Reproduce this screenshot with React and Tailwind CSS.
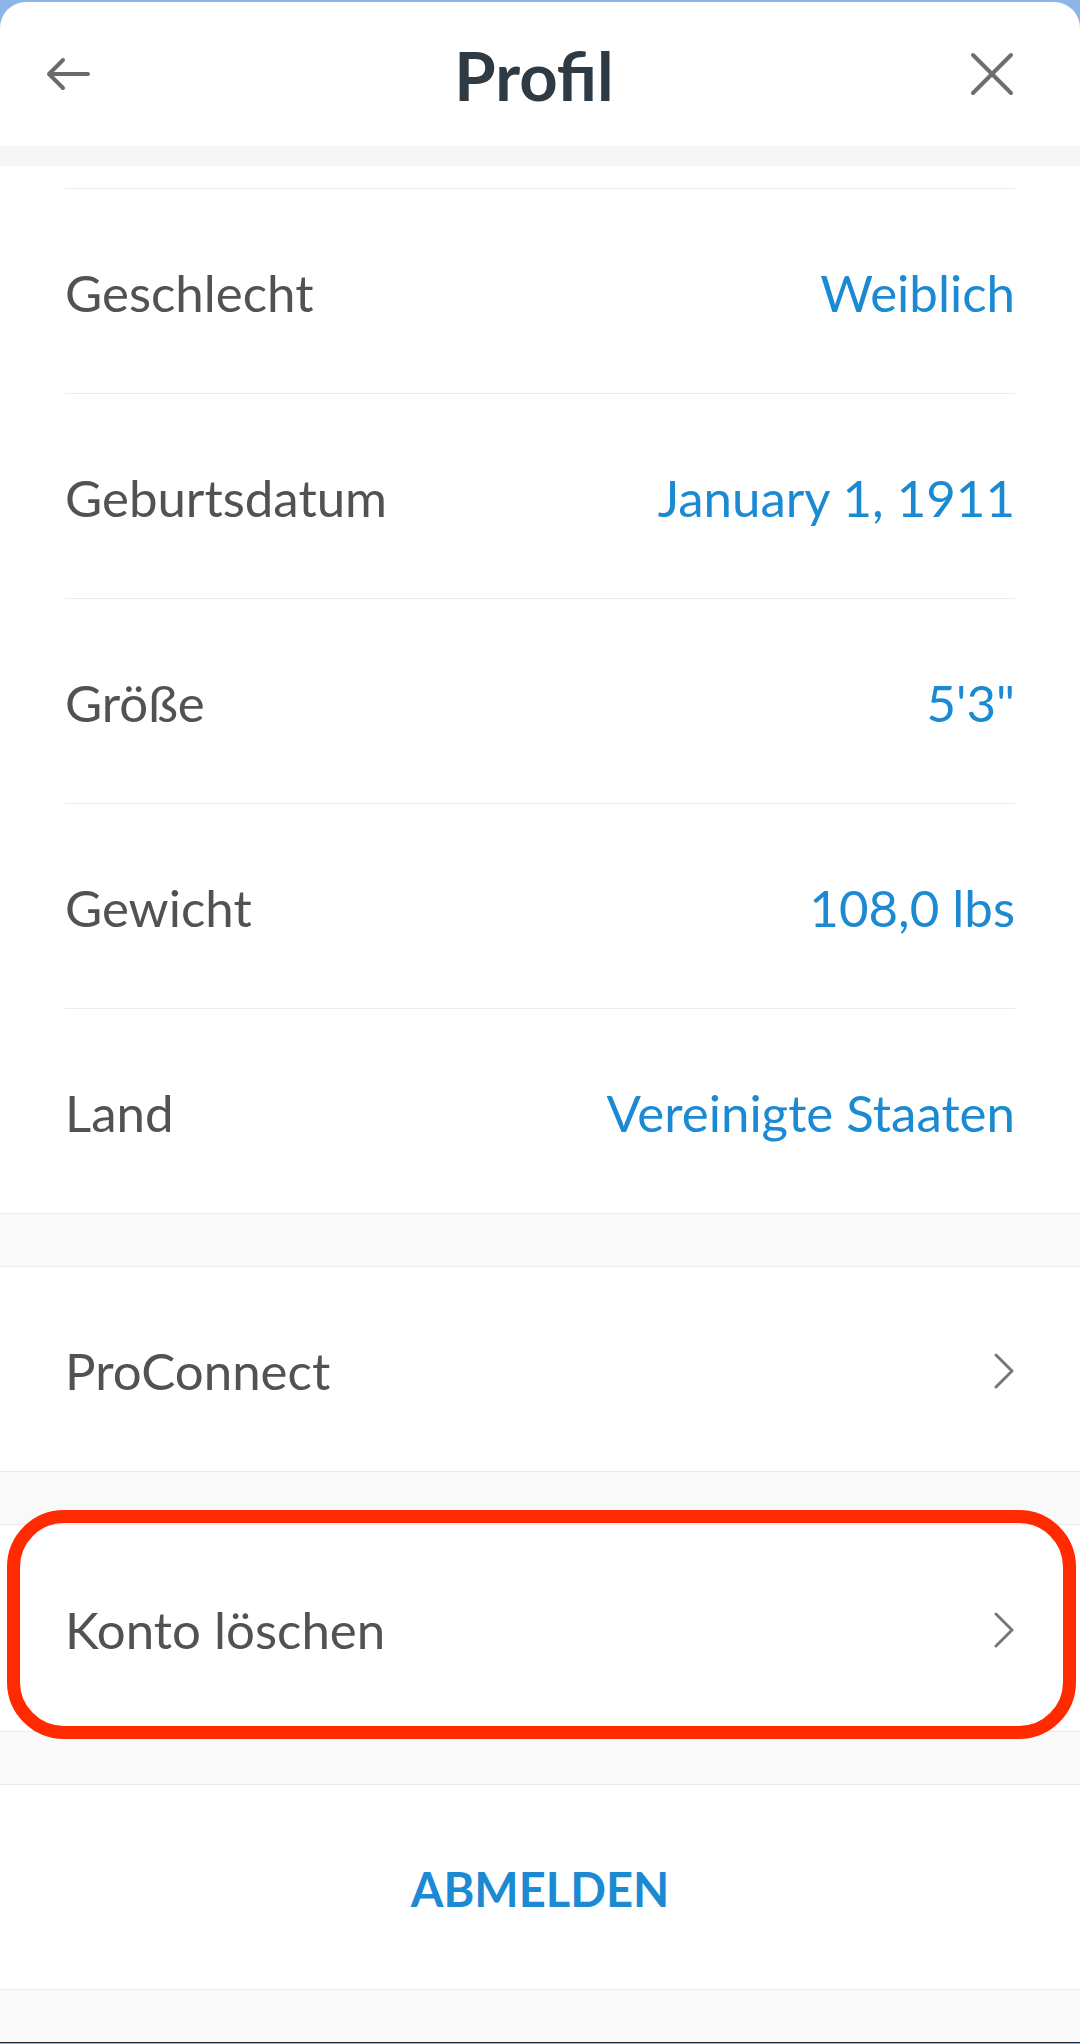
const rows = [
  { label: 'Geschlecht', value: 'Weiblich' },
  { label: 'Geburtsdatum', value: 'January 1, 1911' },
  { label: 'Größe', value: '5\'3"' },
  { label: 'Gewicht', value: '108,0 lbs' },
  { label: 'Land', value: 'Vereinigte Staaten' },
];

function Chevron() {
  return (
    <svg width="22" height="36" viewBox="0 0 22 36" fill="none" stroke="#777777" strokeWidth="3" strokeLinecap="round" strokeLinejoin="round">
      <polyline points="3,2 19,18 3,34" />
    </svg>
  );
}

function Band() {
  return <div className="h-[54px] bg-[#f9f9f9] border-y border-[#ebebeb]" />;
}

export default function App() {
  return (
    <div className="w-full min-h-[2044px] bg-[#8db6e6] pt-[2px]" style={{ fontFamily: 'Lato, "Noto Sans", sans-serif' }}>
      <div className="bg-white rounded-t-[26px] overflow-hidden">
        {/* header */}
        <div className="h-[144px] flex items-center justify-between pl-[46px] pr-[66px]">
          <svg width="44" height="34" viewBox="0 0 44 34" fill="none" stroke="#6b6b6b" strokeWidth="4" strokeLinecap="round" strokeLinejoin="round">
            <path d="M42 17H3M17 3L3 17L17 31" />
          </svg>
          <h1 className="text-[67px] font-bold text-[#2e3a44] leading-none pt-[2px] ml-[8px]">Profil</h1>
          <svg width="44" height="44" viewBox="0 0 44 44" fill="none" stroke="#6d6d6d" strokeWidth="4" strokeLinecap="round">
            <path d="M3 3L41 41M41 3L3 41" />
          </svg>
        </div>
        <div className="h-[20px] bg-[#f5f6f8]" />

        {/* personal data */}
        <div className="h-[22px]" />
        {rows.map((r) => (
          <div key={r.label} className="mx-[65px] h-[205px] pt-[4px] border-t border-[#ececec] flex items-center justify-between">
            <span className="text-[51px] text-[#525252]">{r.label}</span>
            <span className="text-[51px] text-[#1b8ad3]">{r.value}</span>
          </div>
        ))}
        <Band />

        <div className="h-[204px] px-[65px] pt-[4px] flex items-center justify-between">
          <span className="text-[51px] text-[#525252]">ProConnect</span>
          <Chevron />
        </div>
        <Band />

        <div className="relative h-[206px]">
          <div className="h-full px-[65px] pt-[4px] flex items-center justify-between">
            <span className="text-[51px] text-[#525252]">Konto löschen</span>
            <Chevron />
          </div>
          <div className="absolute left-[7px] right-[4px] top-[-15px] bottom-[-8px] border-[13px] border-[#ff2a00] rounded-[57px] pointer-events-none" />
        </div>
        <Band />

        <div className="h-[204px] pt-[4px] flex items-center justify-center">
          <span className="text-[47px] font-bold text-[#1b8ad3]">ABMELDEN</span>
        </div>
        <div className="h-[54px] bg-[#f9f9f9] border-t border-[#ebebeb] border-b border-b-[#222222]" />
      </div>
    </div>
  );
}
